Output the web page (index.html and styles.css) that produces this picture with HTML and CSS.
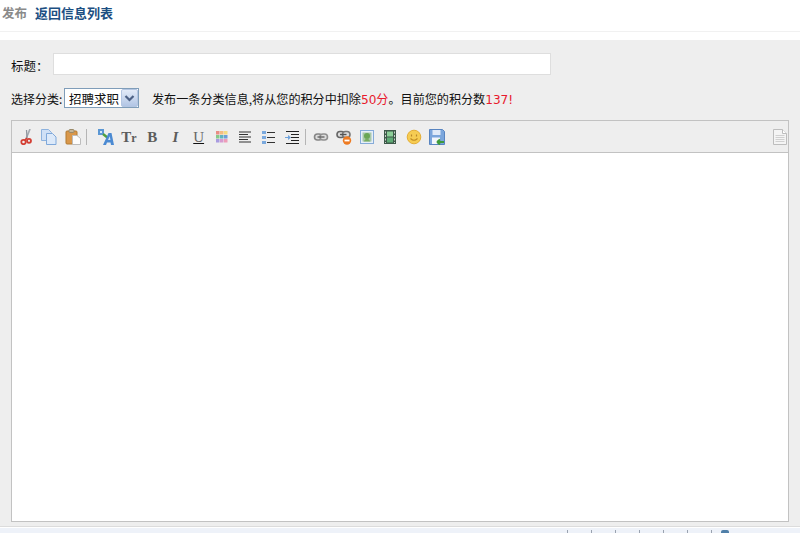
FILE: index.html
```html
<!DOCTYPE html>
<html lang="zh-CN">
<head>
<meta charset="utf-8">
<title>发布</title>
<link rel="stylesheet" href="styles.css">
</head>
<body>
<header class="head">
  <span class="head-title">发布</span>
  <a class="head-link" href="#">返回信息列表</a>
</header>
<main class="panel">
  <div class="row-title">
    <label class="title-label" for="t">标题：</label>
    <input class="title-input" id="t" type="text">
  </div>
  <div class="row-cat">
    <span class="cat-label">选择分类:</span>
    <span class="select-wrap">
      <select class="select"><option>招聘求职</option></select>
      <svg class="select-arrow" width="17" height="18" viewBox="0 0 17 18">
        <defs><linearGradient id="ga" x1="0" y1="0" x2="0" y2="1"><stop offset="0" stop-color="#e4ecf8"/><stop offset="1" stop-color="#b0c4e4"/></linearGradient></defs>
        <rect x=".5" y=".5" width="16" height="17" rx="1.5" fill="url(#ga)" stroke="#b4c6e2"/>
        <path d="M4.500 7l4 4 4-4" fill="none" stroke="#4d6185" stroke-width="2.200"/>
      </svg>
    </span>
    <span class="notice">发布一条分类信息,将从您的积分中扣除<em class="red">50分</em>。目前您的积分数<em class="red">137</em><em class="red">!</em></span>
  </div>
  <section class="editor">
    <div class="toolbar">
      <span class="tool"><svg width="16" height="16" viewBox="0 0 16 16"><path d="M12 0L8 10" stroke="#a4a9b0" stroke-width="1.700" fill="none"/><path d="M8.500 1L9 9" stroke="#8f959d" stroke-width="1.300" fill="none"/><path d="M9 9L6.500 11.500" stroke="#cf3d33" stroke-width="1.600"/><circle cx="5.500" cy="13" r="2.200" fill="none" stroke="#d33f34" stroke-width="1.800"/><circle cx="11" cy="11.800" r="2" fill="none" stroke="#d33f34" stroke-width="1.800"/></svg></span>
      <span class="tool"><svg width="16" height="16" viewBox="0 0 16 16"><path d="M.5.500h7l3 3v8H.5z" fill="#cfe0f6" stroke="#8db2de"/><path d="M5.500 4.500h6l3.500 3.500v7.500H5.500z" fill="#dce9f9" stroke="#7fa8da"/></svg></span>
      <span class="tool"><svg width="16" height="16" viewBox="0 0 16 16"><rect x="1" y="2" width="11" height="13" rx="1" fill="#d9974a" stroke="#b27a30"/><rect x="4" y=".5" width="5" height="3" rx="1" fill="#c4b69c" stroke="#9b8a68"/><path d="M7.500 6.500h4.500l3.500 3v6h-8z" fill="#fdfdfd" stroke="#bdbdbd"/></svg></span>
      <span class="sep"></span>
      <span class="tool"><svg width="16" height="16" viewBox="0 0 16 16"><path d="M0 0h6v6H0z" fill="#5b97d4"/><path d="M2 2h2v2H2z" fill="#d7e7f7"/><path d="M5 5l5 4" stroke="#4fa040" stroke-width="2.400"/><path d="M10.500 4L5 16h3l1-2.500h3.500l.5 2.500H16L13.500 4z" fill="#4b8ad2"/><path d="M10 11l1.800-3.800.6 3.800z" fill="#d7e6f7"/></svg></span>
      <span class="tool glyph bold tr">T<small class="tr-small">r</small></span>
      <span class="tool glyph bold">B</span>
      <span class="tool glyph ital">I</span>
      <span class="tool glyph under">U</span>
      <span class="tool"><svg width="16" height="16" viewBox="0 0 16 16"><path d="M2 2h3.500v3.500H2z" fill="#ea8d84"/><path d="M6 2h3.500v3.500H6z" fill="#f2bc80"/><path d="M10 2h3.500v3.500H10z" fill="#f3dc82"/><path d="M2 6h3.500v3.500H2z" fill="#86c98a"/><path d="M6 6h3.500v3.500H6z" fill="#5fb3bd"/><path d="M10 6h3.500v3.500H10z" fill="#6c9cd8"/><path d="M2 10h3.500v3.500H2z" fill="#a99be0"/><path d="M6 10h3.500v3.500H6z" fill="#d79ad0"/><path d="M10 10h3.500v3.500H10z" fill="#ee9cb8"/></svg></span>
      <span class="tool"><svg width="16" height="16" viewBox="0 0 16 16"><path d="M2 3h12M2 5.500h9M2 8h12M2 10.500h9M2 13h12" stroke="#333" stroke-width="1"/></svg></span>
      <span class="tool"><svg width="16" height="16" viewBox="0 0 16 16"><path d="M7 3.500h8M7 8.500h8M7 13.500h8" stroke="#333"/><path d="M2 2h4v3H2zM2 7h4v3H2zM2 12h4v3H2z" fill="#7aa9de"/></svg></span>
      <span class="tool"><svg width="16" height="16" viewBox="0 0 16 16"><path d="M2 2.500h13M7 5.500h8M7 8.500h8M7 11.500h8M2 14.500h13" stroke="#222"/><path d="M1 8h3V6l3 2.500L4 11V9H1z" fill="#6fa3dc"/></svg></span>
      <span class="sep sep-tight"></span>
      <span class="tool"><svg width="16" height="16" viewBox="0 0 16 16"><rect x="1.500" y="5" width="7.500" height="6" rx="3" fill="#dcdcdc" stroke="#858585" stroke-width="1.600"/><rect x="7" y="5" width="7.500" height="6" rx="3" fill="#dcdcdc" stroke="#909090" stroke-width="1.600"/><path d="M4.500 8h7" stroke="#666" stroke-width="1.400"/></svg></span>
      <span class="tool"><svg width="16" height="16" viewBox="0 0 16 16"><rect x="1" y="2.500" width="7.500" height="6" rx="3" fill="#dcdcdc" stroke="#666" stroke-width="1.600"/><rect x="6.500" y="2.500" width="7.500" height="6" rx="3" fill="#dcdcdc" stroke="#777" stroke-width="1.600"/><path d="M4 5.500h6.500" stroke="#555" stroke-width="1.400"/><circle cx="11" cy="11.500" r="4.200" fill="#ee7b22"/><path d="M8.500 11.500h5" stroke="#fff" stroke-width="1.800"/></svg></span>
      <span class="tool"><svg width="16" height="16" viewBox="0 0 16 16"><rect x="1.500" y="1.500" width="13" height="13" fill="#e6eff8" stroke="#86abd8"/><rect x="3.500" y="3.500" width="9" height="9" fill="#a8c8a8"/><circle cx="8" cy="7" r="3" fill="#69a655"/><path d="M4.500 12.500l3.500-4 3.500 4z" fill="#78ad62"/></svg></span>
      <span class="tool"><svg width="16" height="16" viewBox="0 0 16 16"><rect x="2" y="1" width="12" height="14" fill="#3e5a4a"/><path d="M5 2.500h6v5H5z" fill="#8ccf98"/><path d="M5 8.500h6v5H5z" fill="#5fab75"/><path d="M3 2.500h1v2H3zM3 6h1v2H3zM3 9.500h1v2H3zM3 13h1v1H3zM12 2.500h1v2h-1zM12 6h1v2h-1zM12 9.500h1v2h-1zM12 13h1v1h-1z" fill="#c8d0c8"/></svg></span>
      <span class="tool"><svg width="16" height="16" viewBox="0 0 16 16"><circle cx="8" cy="8" r="6.800" fill="#f6cc52" stroke="#e4ae36"/><path d="M5.500 5.500v2M10.500 5.500v2" stroke="#b8862a" stroke-width="1.200"/><path d="M4.500 9.500q3.500 3.500 7 0" fill="none" stroke="#c08c22" stroke-width="1.100"/></svg></span>
      <span class="tool"><svg width="16" height="16" viewBox="0 0 16 16"><path d="M.5.500h13l2 2v13H.5z" fill="#7ba6dc" stroke="#5884c0"/><rect x="3.500" y="1" width="8" height="5" fill="#dfeaf8"/><rect x="3" y="8.500" width="8" height="6.500" fill="#f2f6fb"/><path d="M8 13h7M8 13l3-2.500M8 13l3 2.500" stroke="#3f9a3a" stroke-width="1.800" fill="none"/></svg></span>
      <span class="tool tool-end"><svg width="16" height="16" viewBox="0 0 16 16"><path d="M1.500.500h9l4 4v11h-13z" fill="#f4f4f4" stroke="#bdbdbd"/><path d="M10.500.500v4h4" fill="#fff" stroke="#bdbdbd"/><path d="M3.500 6.500h9M3.500 8.500h9M3.500 10.500h9M3.500 12.500h9" stroke="#d0d0d0"/></svg></span>
    </div>
    <div class="edit-area"></div>
  </section>
</main>
<footer class="foot">
  <span class="tick"></span><span class="tick"></span><span class="tick"></span><span class="tick"></span><span class="tick"></span><span class="tick"></span><span class="tick"></span>
  <span class="foot-icon"></span>
</footer>
</body>
</html>
```
FILE: styles.css
```css
* { box-sizing: border-box; }
html, body { margin: 0; height: 533px; overflow: hidden; background: #fff; }
body {
  font-family: "Noto Sans CJK SC", "DejaVu Sans", sans-serif;
  font-size: 12px;
  color: #111;
  display: flex;
  flex-direction: column;
}
.head {
  height: 32px;
  padding: 5px 0 0 2px;
  border-bottom: 1px solid #f1f1f1;
  display: flex;
  gap: 8px;
  line-height: 16px;
  font-size: 13px;
  font-weight: 700;
  margin-bottom: 8px;
}
.head-title { color: #8a8a8a; font-size: 12.500px; }
.head-link { color: #1c4f82; text-decoration: none; }
.panel {
  height: 487px;
  background: #eeeeee;
  padding: 13px 11px 0;
  border-bottom: 1px solid #dcdcdc;
}
.row-title { display: flex; align-items: center; height: 22px; }
.title-label { width: 42px; line-height: 22px; padding-top: 4px; font-size: 12.500px; }
.title-input {
  width: 498px;
  height: 22px;
  border: 1px solid #dedede;
  background: #fff;
  margin: 0;
  padding: 0;
}
.row-cat { display: flex; align-items: center; height: 20px; margin-top: 13px; }
.cat-label { width: 53px; font-size: 12px; white-space: nowrap; }
.select-wrap { position: relative; width: 75px; height: 20px; }
.select {
  width: 75px;
  height: 20px;
  appearance: none;
  border: 1px solid #7f9db9;
  background: #fff;
  border-radius: 0;
  font: 12.500px "Noto Sans CJK SC", sans-serif;
  color: #111;
  padding: 0 0 0 4px;
}
.select-arrow { position: absolute; right: 1px; top: 1px; }
.notice { margin-left: 13px; font-size: 12.100px; white-space: nowrap; }
.red { color: #e8192c; font-style: normal; font-family: "DejaVu Sans", "Noto Sans CJK SC", sans-serif; }
.editor {
  margin-top: 12px;
  width: 778px;
  height: 402px;
  border: 1px solid #c2c2c2;
  display: flex;
  flex-direction: column;
}
.toolbar {
  height: 32px;
  flex: none;
  border-bottom: 1px solid #c2c2c2;
  display: flex;
  align-items: center;
  padding: 0 0 0 2.500px;
}
.tool {
  width: 23.250px;
  height: 16px;
  display: flex;
  justify-content: center;
  align-items: center;
  flex: none;
}
.tool-end { width: 16px; margin-left: auto; }
.glyph { font-family: "Liberation Serif", serif; font-size: 15px; color: #5c5c5c; line-height: 16px; }
.bold { font-weight: 700; }
.ital { font-style: italic; font-weight: 700; }
.under { text-decoration: underline; text-decoration-color: #111; color: #666; font-weight: 400; }
.tr { align-items: baseline; }
.tr-small { font-size: 12px; }
.sep { width: 1px; height: 16px; background: #b5b5b5; margin: 0 7.400px 0 1.400px; flex: none; }
.sep-tight { margin-right: 3.400px; }
.edit-area { flex: 1; background: #fff; }
.foot {
  flex: 1;
  margin-top: 1px;
  background: #eef2f9;
  display: flex;
  justify-content: flex-end;
  gap: 23px;
  padding-right: 88px;
  position: relative;
}
.tick { width: 1px; height: 3px; margin-top: 2px; background: #9aa3b0; }
.foot-icon { position: absolute; left: 721px; top: 2px; width: 8px; height: 3px; background: #4f7fa8; border-radius: 2px 2px 0 0; }
```
